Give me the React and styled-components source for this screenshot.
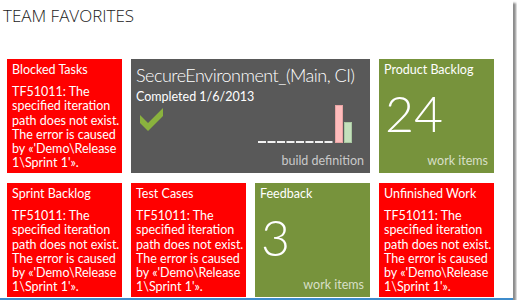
import React from 'react';
import styled, { createGlobalStyle } from 'styled-components';

const GlobalStyle = createGlobalStyle`
	html, body {
		margin: 0;
		padding: 0;
		background: #ffffff;
	}
	body {
		font-family: Lato, 'Liberation Sans', sans-serif;
	}
`;

const errorText =
	"TF51011: The\nspecified iteration\npath does not exist.\nThe error is caused\nby «'Demo\\Release\n1\\Sprint 1'».";

const tiles = [
	{ kind: 'error', title: 'Blocked Tasks' },
	{ kind: 'build' },
	{ kind: 'count', title: 'Product Backlog', count: 24 },
	{ kind: 'error', title: 'Sprint Backlog' },
	{ kind: 'error', title: 'Test Cases' },
	{ kind: 'count', title: 'Feedback', count: 3 },
	{ kind: 'error', title: 'Unfinished Work' },
];

const App = () => {
	return (
		<>
			<GlobalStyle />
			<Frame>
				<Heading>TEAM FAVORITES</Heading>
				<TileGrid>
					{tiles.map((tile, i) => {
						if (tile.kind === 'error') {
							return (
								<Tile key={i} $tone="#ff0000">
									<TileTitle>{tile.title}</TileTitle>
									<ErrorBody>{errorText}</ErrorBody>
								</Tile>
							);
						}
						if (tile.kind === 'count') {
							return (
								<Tile key={i} $tone="#77933c">
									<TileTitle>{tile.title}</TileTitle>
									<BigCount>{tile.count}</BigCount>
									<Footer $color="rgba(255,255,255,0.72)">work items</Footer>
								</Tile>
							);
						}
						return (
							<Tile key={i} $tone="#595959" $wide>
								<BuildName>SecureEnvironment_(Main, CI)</BuildName>
								<BuildStatus>Completed 1/6/2013</BuildStatus>
								<BuildRow>
									<CheckMark viewBox="0 0 24 24">
										<polygon points="0,7 8,15 23,0 23,8 8,23 0,15" fill="#8ab23e" />
									</CheckMark>
									<Chart viewBox="0 0 96 40">
										{Array.from({ length: 8 }).map((_, d) => (
											<rect key={d} x={d * 9.5} y="37" width="8" height="2" fill="#f2f2f2" />
										))}
										<rect x="77.5" y="1.5" width="7" height="37" fill="#ffbcbc" stroke="#e8a4a4" />
										<rect x="86.5" y="18.5" width="7" height="20" fill="#c4e0bc" stroke="#a9c8a1" />
									</Chart>
								</BuildRow>
								<Footer $color="#c9c9c9">build definition</Footer>
							</Tile>
						);
					})}
				</TileGrid>
			</Frame>
		</>
	);
};

export default App;

const Frame = styled.div`
	box-sizing: border-box;
	width: 513px;
	height: 300px;
	padding: 6px 0 0 7px;
	border-bottom: 2px solid #3d8ccc;
	box-shadow: 3px 3px 2px rgba(0, 0, 0, 0.45);
	overflow: hidden;
	background: #ffffff;
`;

const Heading = styled.h1`
	margin: 0 0 0 -4px;
	font-family: 'Open Sans', sans-serif;
	font-size: 17px;
	font-weight: 300;
	line-height: 20px;
	color: #1a1a1a;
`;

const TileGrid = styled.div`
	display: grid;
	grid-template-columns: repeat(4, 115px);
	grid-auto-rows: 114px;
	column-gap: 9px;
	row-gap: 10px;
	margin-top: 33px;
`;

const Tile = styled.div`
	grid-column: ${(p) => (p.$wide ? 'span 2' : 'span 1')};
	box-sizing: border-box;
	display: flex;
	flex-direction: column;
	padding: 3px 6px 5px 5px;
	background: ${(p) => p.$tone};
	color: #ffffff;
	overflow: hidden;
`;

const TileTitle = styled.div`
	font-size: 12.5px;
	line-height: 15px;
	white-space: nowrap;
`;

const ErrorBody = styled.div`
	margin-top: 8px;
	font-size: 12.5px;
	line-height: 14.3px;
	white-space: pre;
`;

const BigCount = styled.div`
	margin: 8px 0 0 1px;
	font-size: 50px;
	font-weight: 300;
	line-height: 56px;
`;

const Footer = styled.div`
	margin-top: auto;
	text-align: right;
	font-size: 12.5px;
	line-height: 15px;
	color: ${(p) => p.$color};
`;

const BuildName = styled.div`
	margin-top: 1px;
	font-size: 18px;
	font-weight: 300;
	letter-spacing: -0.5px;
	line-height: 24px;
	white-space: nowrap;
`;

const BuildStatus = styled.div`
	margin-top: 2px;
	font-size: 12.5px;
	line-height: 15px;
`;

const BuildRow = styled.div`
	display: flex;
	justify-content: space-between;
	align-items: flex-end;
	padding: 0 10px 0 4px;
`;

const CheckMark = styled.svg`
	width: 24px;
	height: 24px;
	margin-bottom: 8px;
`;

const Chart = styled.svg`
	width: 96px;
	height: 40px;
	margin-bottom: -4px;
`;
